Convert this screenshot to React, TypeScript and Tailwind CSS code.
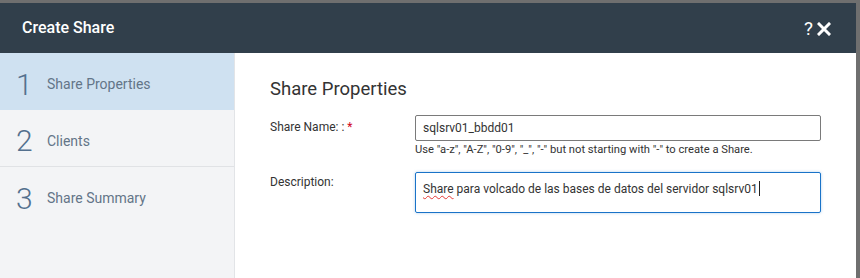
export default function App() {
  const steps = [
    { n: '1', label: 'Share Properties', active: true },
    { n: '2', label: 'Clients', active: false },
    { n: '3', label: 'Share Summary', active: false },
  ];

  return (
    <div className="h-[278px] w-[860px] overflow-hidden bg-[#6f6f6f] pt-[3px] font-['Roboto',sans-serif]">
      <div className="flex h-full w-[856px] flex-col bg-white">
        {/* header */}
        <div className="flex h-[50px] shrink-0 items-center justify-between bg-[#313f4b] pl-[22px] pr-[25px]">
          <span className="text-[16px] font-medium text-white">Create Share</span>
          <div className="flex items-center gap-[4px] text-white">
            <span className="text-[19px] leading-none">?</span>
            <svg width="14" height="14" viewBox="0 0 14 14" className="mt-[1px]">
              <path d="M2 2L12 12M12 2L2 12" stroke="white" strokeWidth="3" strokeLinecap="square" />
            </svg>
          </div>
        </div>

        <div className="flex flex-1">
          {/* steps */}
          <div className="w-[235px] shrink-0 border-r border-[#e2e4e7] bg-[#f3f4f6]">
            {steps.map((s, i) => (
              <div
                key={s.n}
                className={
                  'flex h-[57px] items-center gap-[14px] pl-[16px] pt-[6px] ' +
                  (s.active ? 'bg-[#cfe1f1] ' : '') +
                  (i === 1 ? 'border-b border-[#e0e2e5]' : '')
                }
              >
                <span className="w-[17px] text-[30px] font-light leading-none text-[#54708e]">{s.n}</span>
                <span className="text-[14px] text-[#637588]">{s.label}</span>
              </div>
            ))}
          </div>

          {/* form */}
          <div className="flex-1 pl-[35px] pt-[24px] text-[#333]">
            <h2 className="text-[18.5px] leading-[24px] text-[#333]">Share Properties</h2>

            <div className="mt-[14px] flex">
              <label className="w-[145px] pt-[3px] text-[12px]">
                Share Name: : <span className="text-[#d0021b]">*</span>
              </label>
              <div className="w-[406px]">
                <div className="flex h-[26px] items-center rounded-[2px] border border-[#7a7a7a] px-[7px] text-[12px] text-[#333]">
                  sqlsrv01_bbdd01
                </div>
                <p className="mt-[1px] text-[11.2px] text-[#333]">
                  Use "a-z", "A-Z", "0-9", "_", "-" but not starting with "-" to create a Share.
                </p>
              </div>
            </div>

            <div className="mt-[13px] flex">
              <label className="w-[145px] pt-[1px] text-[12px]">Description:</label>
              <div className="h-[41px] w-[406px] rounded-[2px] border border-[#1a73c8] px-[7px] pt-[5px] text-[12px] leading-[18px] text-[#333] shadow-[0_0_3px_rgba(26,115,200,0.35)]">
                <span className="underline decoration-[#e53935] decoration-wavy decoration-1 underline-offset-2">Share</span>{' '}
                para volcado de las bases de datos del servidor sqlsrv01
                <span className="ml-[1px] inline-block h-[15px] w-px translate-y-[3px] bg-[#222]" />
              </div>
            </div>
          </div>
        </div>
      </div>
    </div>
  );
}
